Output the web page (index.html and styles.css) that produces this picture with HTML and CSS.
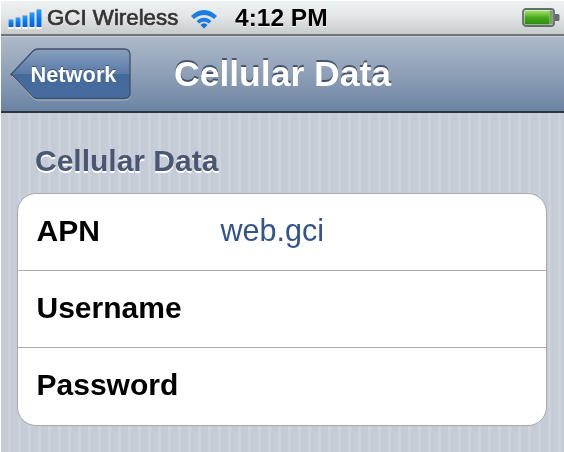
FILE: index.html
```html
<!DOCTYPE html>
<html lang="en">
<head>
<meta charset="utf-8">
<title>Cellular Data</title>
<link rel="stylesheet" href="styles.css">
</head>
<body>
<div class="screen">
  <header class="status">
    <div class="status-left">
      <svg class="signal" width="34" height="20" viewBox="0 0 34 20">
        <defs>
          <linearGradient id="bar" x1="0" y1="0" x2="0" y2="1">
            <stop offset="0" stop-color="#2f9cf2"/>
            <stop offset="0.5" stop-color="#0a78ea"/>
            <stop offset="1" stop-color="#0b5fd6"/>
          </linearGradient>
        </defs>
        <g fill="#f4f8fb">
          <rect x="0" y="10" width="6" height="10"/>
          <rect x="7" y="8" width="6" height="12"/>
          <rect x="14" y="6" width="6" height="14"/>
          <rect x="21" y="3" width="6" height="17"/>
          <rect x="28" y="0" width="6" height="20"/>
        </g>
        <g fill="#9fb6cc">
          <rect x="0.5" y="10" width="5" height="1"/>
          <rect x="7.5" y="8" width="5" height="1"/>
          <rect x="14.5" y="6" width="5" height="1"/>
          <rect x="21.5" y="3" width="5" height="1"/>
          <rect x="28.5" y="0" width="5" height="1"/>
        </g>
        <g fill="url(#bar)">
          <rect x="0.5" y="11" width="5" height="7"/>
          <rect x="7.5" y="9" width="5" height="9"/>
          <rect x="14.5" y="7" width="5" height="11"/>
          <rect x="21.5" y="4" width="5" height="14"/>
          <rect x="28.5" y="1" width="5" height="17"/>
        </g>
      </svg>
      <span class="carrier">GCI Wireless</span>
      <svg class="wifi" width="30" height="24" viewBox="0 0 30 24">
        <path d="M2 10 C10 2 20 2 28 10 L25 13 C18.500 7.500 11.500 7.500 5 13 Z" fill="#1a7ce4"/>
        <path d="M7.500 15 C12 10.500 18 10.500 22.500 15 L19.800 17.500 C17 15 13 15 10.200 17.500 Z" fill="#1a7ce4"/>
        <path d="M11.500 19 Q15 15.500 18.500 19 L15 22.500 Z" fill="#0f6edc"/>
      </svg>
    </div>
    <span class="time">4:12 PM</span>
    <svg class="battery" width="38" height="20" viewBox="0 0 38 20">
      <defs>
        <linearGradient id="charge" x1="0" y1="0" x2="0" y2="1">
          <stop offset="0" stop-color="#a5e66f"/>
          <stop offset="0.5" stop-color="#4aa91a"/>
          <stop offset="1" stop-color="#2c8c0b"/>
        </linearGradient>
        <linearGradient id="cap" x1="0" y1="0" x2="1" y2="0">
          <stop offset="0" stop-color="#5ea830"/>
          <stop offset="1" stop-color="#9a9d9d"/>
        </linearGradient>
      </defs>
      <rect x="1" y="1" width="31" height="17" rx="3" fill="#eef0f0" stroke="#666b6f" stroke-width="1.800"/>
      <rect x="2.500" y="2.500" width="25" height="14" fill="url(#charge)"/>
      <rect x="27.500" y="2.500" width="3.500" height="14" fill="url(#cap)"/>
      <path d="M33 6 H36 Q37.500 6 37.500 7.500 V11.500 Q37.500 13 36 13 H33 Z" fill="#666b6f"/>
    </svg>
  </header>
  <nav class="navbar">
    <div class="back">
      <svg class="back-shape" width="122" height="53" viewBox="0 0 122 53">
        <defs>
          <linearGradient id="btn" x1="0" y1="0" x2="0" y2="1">
            <stop offset="0" stop-color="#8aa0bf"/>
            <stop offset="0.5" stop-color="#587ba8"/>
            <stop offset="0.5" stop-color="#446a9b"/>
            <stop offset="1" stop-color="#476d9e"/>
          </linearGradient>
        </defs>
        <path d="M1 26.500 L23 3 Q25 1 28 1 H114 Q120 1 120 7 V45 Q120 50.500 114 50.500 H28 Q25 50.500 23 49 Z" fill="url(#btn)" stroke="#3f4f68" stroke-width="1.300"/>
        <path d="M2 28 L23.500 50.500 Q25 52 28 52 H114 Q119 52 120.500 49" fill="none" stroke="#a9b7ca" stroke-width="1"/>
      </svg>
      <span class="back-label">Network</span>
    </div>
    <h1 class="nav-title">Cellular Data</h1>
  </nav>
  <main class="content">
    <h2 class="section">Cellular Data</h2>
    <div class="card">
      <div class="row">
        <span class="label">APN</span>
        <span class="value">web.gci</span>
      </div>
      <div class="row">
        <span class="label">Username</span>
      </div>
      <div class="row">
        <span class="label">Password</span>
      </div>
    </div>
  </main>
</div>
</body>
</html>
```

FILE: styles.css
```css
html, body {
  margin: 0;
  padding: 0;
  background: #fff;
}
body {
  font-family: "Liberation Sans", Arial, sans-serif;
  overflow: hidden;
}
.screen {
  width: 563px;
  height: 451px;
  margin: 1px 0 0 1px;
  display: flex;
  flex-direction: column;
  overflow: hidden;
  filter: blur(0.45px);
}
.status {
  height: 33px;
  flex: none;
  display: flex;
  align-items: center;
  padding: 0 4px 0 7px;
  background: linear-gradient(#eef1f1, #e4e7e7 45%, #c6cbcc);
  border-bottom: 2px solid #6f7377;
}
.status-left {
  display: flex;
  align-items: center;
  width: 227px;
  flex: none;
}
.signal {
  flex: none;
  margin-top: 2px;
}
.carrier {
  font-size: 22.3px;
  font-weight: 400;
  -webkit-text-stroke: 0.7px #333;
  color: #333;
  margin-left: 5px;
  white-space: nowrap;
  text-shadow: 0 1px 0 #f6f7f7;
}
.wifi {
  flex: none;
  margin-left: 11px;
}
.time {
  font-size: 24.5px;
  font-weight: 700;
  color: #000;
  white-space: nowrap;
  text-shadow: 0 1px 0 #f6f7f7;
}
.battery {
  flex: none;
  margin-left: auto;
}
.navbar {
  height: 74px;
  flex: none;
  display: flex;
  align-items: center;
  padding-left: 9px;
  background: linear-gradient(#aeb9ca, #8ea0b7 50%, #6b83a3);
  border-top: 1px solid #c5ced9;
  border-bottom: 2px solid #2d3540;
  position: relative;
}
.back {
  width: 122px;
  height: 53px;
  flex: none;
  display: flex;
  align-items: center;
  justify-content: center;
  position: relative;
}
.back-shape {
  position: absolute;
  left: 0;
  top: 0;
}
.back-label {
  position: relative;
  font-size: 21.8px;
  font-weight: 700;
  color: #fff;
  margin: 2px 0 0 5px;
  text-shadow: 0 -1px 0 rgba(40, 55, 80, 0.7);
}
.nav-title {
  margin: 0 0 0 42px;
  font-size: 35.5px;
  font-weight: 700;
  color: #fff;
  white-space: nowrap;
  text-shadow: 0 -2px 0 rgba(45, 58, 80, 0.75);
}
.content {
  flex: 1;
  padding: 33px 16px 0;
  background-color: #c6cdd6;
  background-image: repeating-linear-gradient(90deg, #c5ccd6 0, #c5ccd6 7px, #cbd2db 7px, #cbd2db 10px);
}
.section {
  margin: 0 0 0 18px;
  height: 47px;
  font-size: 30px;
  line-height: 30px;
  font-weight: 700;
  color: #4a5674;
  text-shadow: 0 1.5px 0 #fff;
}
.card {
  width: 530px;
  background: #fff;
  border: 1.5px solid #a7a9ac;
  border-radius: 19px;
  box-sizing: border-box;
  height: 233px;
  display: flex;
  flex-direction: column;
}
.row {
  height: 77px;
  flex: none;
  display: flex;
  align-items: center;
  padding-left: 18.5px;
  padding-bottom: 3px;
  box-sizing: border-box;
  border-top: 1.5px solid #acacac;
}
.row:first-child {
  border-top: 0;
  height: 76px;
}
.label {
  width: 184px;
  font-size: 30px;
  font-weight: 700;
  color: #000;
  flex: none;
}
.value {
  font-size: 30.5px;
  color: #31548c;
}
```
